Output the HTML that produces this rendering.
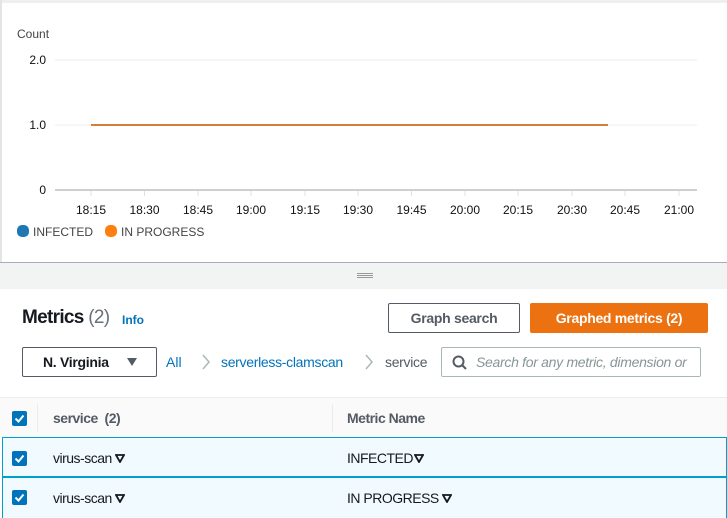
<!DOCTYPE html>
<html><head><style>
*{margin:0;padding:0;box-sizing:border-box}
body{width:727px;height:518px;overflow:hidden;background:#fff;font-family:"Liberation Sans",sans-serif;position:relative}
.a{position:absolute}
.t{font-size:12px;color:#222}
.c{font-size:14px;color:#16191f;letter-spacing:-0.5px}
.cb{position:absolute;width:15px;height:15px;background:#0073bb;border-radius:2px}
.cb svg{display:block}
.tri{display:inline-block;vertical-align:0px;margin-left:3px}
</style></head><body>
<div class="a" style="left:0;top:0;width:727px;height:3px;background:#eef0f0"></div>
<div class="a" style="left:0;top:0;width:2px;height:262px;background:#e3e5e5"></div>
<div class="a t" style="left:17px;top:27px;color:#444">Count</div>
<svg class="a" style="left:0;top:0" width="727" height="262">
<line x1="55" y1="60" x2="697" y2="60" stroke="#ececec"/>
<line x1="55" y1="125" x2="697" y2="125" stroke="#ececec"/>
<line x1="55" y1="190" x2="697" y2="190" stroke="#cfcfcf" stroke-width="2"/>
<g stroke="#e0e0e0">
<line x1="91" y1="191" x2="91" y2="196"/><line x1="144.5" y1="191" x2="144.5" y2="196"/><line x1="198" y1="191" x2="198" y2="196"/><line x1="251" y1="191" x2="251" y2="196"/><line x1="305" y1="191" x2="305" y2="196"/><line x1="358" y1="191" x2="358" y2="196"/><line x1="411.5" y1="191" x2="411.5" y2="196"/><line x1="465" y1="191" x2="465" y2="196"/><line x1="518" y1="191" x2="518" y2="196"/><line x1="572" y1="191" x2="572" y2="196"/><line x1="625" y1="191" x2="625" y2="196"/><line x1="679" y1="191" x2="679" y2="196"/>
</g>
<line x1="91" y1="125" x2="608" y2="125" stroke="#d4803c" stroke-width="2"/>
<g font-family="Liberation Sans" font-size="12" fill="#111" text-anchor="end">
<text x="46" y="64">2.0</text><text x="46" y="129">1.0</text><text x="46" y="194">0</text>
</g>
<g font-family="Liberation Sans" font-size="12" fill="#111" text-anchor="middle">
<text x="91" y="214">18:15</text><text x="144.5" y="214">18:30</text><text x="198" y="214">18:45</text><text x="251" y="214">19:00</text><text x="305" y="214">19:15</text><text x="358" y="214">19:30</text><text x="411.5" y="214">19:45</text><text x="465" y="214">20:00</text><text x="518" y="214">20:15</text><text x="572" y="214">20:30</text><text x="625" y="214">20:45</text><text x="679" y="214">21:00</text>
</g>
<rect x="17" y="225" width="12" height="12" rx="5" fill="#1f77b4"/>
<rect x="105" y="225" width="12" height="12" rx="5" fill="#ff7f0e"/>
<text x="33" y="236" font-family="Liberation Sans" font-size="12" fill="#444">INFECTED</text>
<text x="121" y="236" font-family="Liberation Sans" font-size="12" fill="#444">IN PROGRESS</text>
</svg>
<div class="a" style="left:0;top:262px;width:727px;height:27px;background:#f2f3f3;border-top:1px solid #aab"></div>
<div class="a" style="left:357px;top:273px;width:16px;height:1px;background:#999;box-shadow:0 2px 0 #999,0 4px 0 #999"></div>
<div class="a" style="left:0;top:289px;width:727px;height:109px;background:#fff"></div>
<div class="a" style="left:22px;top:307px;font-size:19px;font-weight:bold;color:#16191f;letter-spacing:-0.7px">Metrics <span style="font-weight:normal;color:#687078">(2)</span></div>
<div class="a" style="left:122px;top:313px;font-size:12px;font-weight:bold;color:#0073bb">Info</div>
<div class="a" style="left:388px;top:303px;width:132px;height:30px;border:1px solid #545b64;border-radius:2px;font-size:14px;font-weight:bold;color:#545b64;text-align:center;line-height:28px;letter-spacing:-0.3px">Graph search</div>
<div class="a" style="left:530px;top:303px;width:178px;height:30px;background:#ec7211;border-radius:2px;font-size:14px;font-weight:bold;color:#fff;text-align:center;line-height:30px;letter-spacing:-0.3px">Graphed metrics (2)</div>
<div class="a" style="left:22px;top:347px;width:135px;height:30px;border:1px solid #545b64;border-radius:2px;font-size:14px;font-weight:bold;color:#16191f;line-height:28px;padding-left:20px;letter-spacing:-0.3px">N. Virginia</div>
<svg class="a" style="left:126px;top:357px" width="12" height="10"><path d="M1 1h10L6 9z" fill="#545b64"/></svg>
<div class="a" style="left:166px;top:354px;font-size:14px;color:#0073bb">All</div>
<svg class="a" style="left:201px;top:353px" width="10" height="18"><path d="M2 2l6 7-6 7" fill="none" stroke="#aab7b8" stroke-width="1.5"/></svg>
<div class="a" style="left:221px;top:354px;font-size:14px;color:#0073bb;letter-spacing:-0.3px">serverless-clamscan</div>
<svg class="a" style="left:364px;top:353px" width="10" height="18"><path d="M2 2l6 7-6 7" fill="none" stroke="#aab7b8" stroke-width="1.5"/></svg>
<div class="a" style="left:385px;top:354px;font-size:14px;color:#545b64;letter-spacing:-0.3px">service</div>
<div class="a" style="left:441px;top:347px;width:260px;height:30px;border:1px solid #aab7b8;border-radius:2px;overflow:hidden;white-space:nowrap">
<svg class="a" style="left:10px;top:7px" width="16" height="16"><circle cx="6.5" cy="6.5" r="5" fill="none" stroke="#545b64" stroke-width="2"/><line x1="10" y1="10" x2="14" y2="14" stroke="#545b64" stroke-width="2"/></svg>
<div class="a" style="left:34px;top:6px;font-size:14px;font-style:italic;color:#879596;letter-spacing:-0.3px">Search for any metric, dimension or</div>
</div>
<div class="a" style="left:0;top:397px;width:727px;height:1px;background:#eaeded"></div>
<div class="a" style="left:0;top:398px;width:727px;height:39px;background:#fafafa"></div>
<div class="a" style="left:37px;top:404px;width:1px;height:28px;background:#eaeded"></div>
<div class="a" style="left:332px;top:404px;width:1px;height:28px;background:#eaeded"></div>
<div class="cb" style="left:12px;top:411px"><svg width="15" height="15"><path d="M3.5 7.5l3 3 5-6" stroke="#fff" stroke-width="2" fill="none"/></svg></div>
<div class="a c" style="left:53px;top:410px;font-weight:bold;color:#545b64">service&nbsp; (2)</div>
<div class="a c" style="left:347px;top:410px;font-weight:bold;color:#545b64">Metric Name</div>
<div class="a" style="left:2px;top:437px;width:725px;height:81px;background:#f1faff"></div>
<div class="a" style="left:2px;top:437px;width:725px;height:1px;background:#00a1c9"></div>
<div class="a" style="left:2px;top:476px;width:725px;height:2px;background:#00a1c9"></div>
<div class="a" style="left:2px;top:437px;width:1px;height:81px;background:#00a1c9"></div>
<div class="a" style="left:726px;top:437px;width:1px;height:81px;background:#00a1c9"></div>
<div class="cb" style="left:12px;top:451px"><svg width="15" height="15"><path d="M3.5 7.5l3 3 5-6" stroke="#fff" stroke-width="2" fill="none"/></svg></div>
<div class="a c" style="left:53px;top:450px">virus-scan<svg class="tri" width="10" height="9"><path d="M1 1h8L5 8z" fill="none" stroke="#16191f" stroke-width="1.8"/></svg></div>
<div class="a c" style="left:347px;top:450px">INFECTED<svg class="tri" style="margin-left:1px" width="10" height="9"><path d="M1 1h8L5 8z" fill="none" stroke="#16191f" stroke-width="1.8"/></svg></div>
<div class="cb" style="left:12px;top:490px"><svg width="15" height="15"><path d="M3.5 7.5l3 3 5-6" stroke="#fff" stroke-width="2" fill="none"/></svg></div>
<div class="a c" style="left:53px;top:490px">virus-scan<svg class="tri" width="10" height="9"><path d="M1 1h8L5 8z" fill="none" stroke="#16191f" stroke-width="1.8"/></svg></div>
<div class="a c" style="left:347px;top:490px">IN PROGRESS<svg class="tri" width="10" height="9"><path d="M1 1h8L5 8z" fill="none" stroke="#16191f" stroke-width="1.8"/></svg></div>
</body></html>
